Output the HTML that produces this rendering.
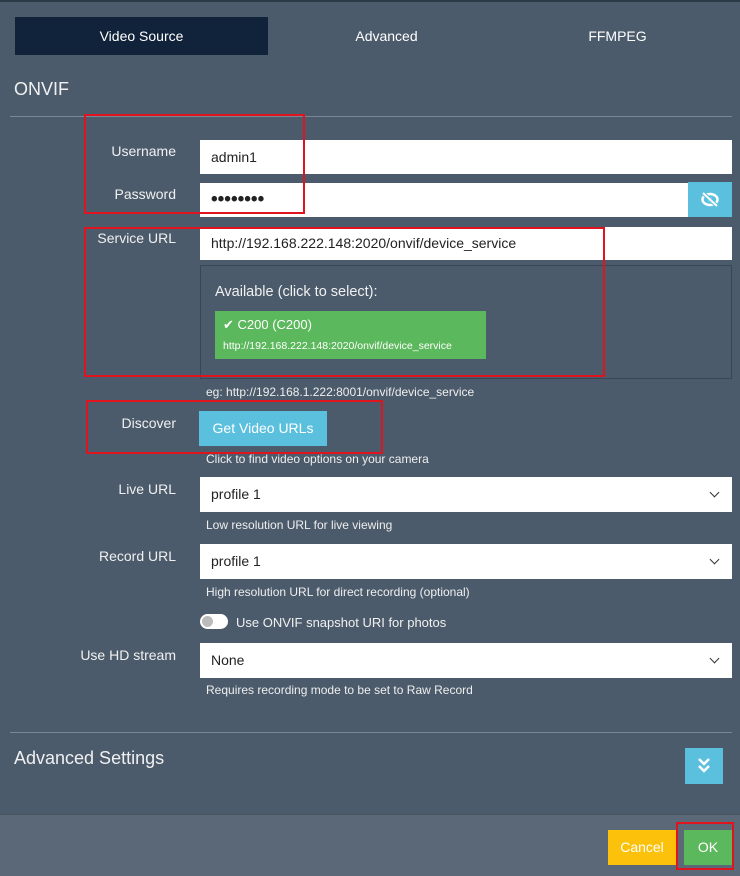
<!DOCTYPE html>
<html><head><meta charset="utf-8"><style>
*{box-sizing:border-box;margin:0;padding:0}
body{width:740px;height:876px;background:#4c5b6b;font-family:"Liberation Sans",sans-serif;color:#f0f0f0;position:relative;overflow:hidden}
.a{position:absolute}
.tab{top:17px;height:38px;width:253px;text-align:center;line-height:38px;font-size:14px;color:#fff}
.lbl{right:564px;font-size:14px;color:#f0f0f0;text-align:right}
.inp{left:200px;width:532px;height:34px;background:#fff;color:#222;font-size:14px;padding-left:11px;line-height:34px}
.help{left:206px;font-size:12px;color:#eee}
.chev{position:absolute;right:14px;top:12px;width:7px;height:7px;border-right:1.5px solid #333;border-bottom:1.5px solid #333;transform:rotate(45deg)}
.red{border:2px solid #e0141e}
.hr{left:10px;width:722px;height:1px;background:#7a8693}
</style></head><body>
<div class="a" style="left:0;top:0;width:740px;height:2px;background:#2c3a48"></div>
<div class="a tab" style="left:15px;background:#10233a">Video Source</div>
<div class="a tab" style="left:260px">Advanced</div>
<div class="a tab" style="left:491px">FFMPEG</div>
<div class="a" style="left:14px;top:79px;font-size:18px">ONVIF</div>
<div class="a hr" style="top:116px"></div>

<div class="a lbl" style="top:143px">Username</div>
<div class="a inp" style="top:140px">admin1</div>
<div class="a lbl" style="top:186px">Password</div>
<div class="a inp" style="top:183px;width:488px;font-size:19px;font-weight:bold;letter-spacing:0px">••••••••</div>
<div class="a" style="left:688px;top:182px;width:44px;height:35px;background:#5bc0de">
<svg width="44" height="35" viewBox="0 0 44 35"><ellipse cx="22" cy="17.5" rx="7.5" ry="5.5" fill="none" stroke="#fff" stroke-width="2.5"/><circle cx="22" cy="17.5" r="2.3" fill="#fff"/><line x1="15" y1="11" x2="29" y2="24" stroke="#5bc0de" stroke-width="4"/><line x1="15" y1="11" x2="29" y2="24" stroke="#fff" stroke-width="2"/></svg></div>

<div class="a lbl" style="top:230px">Service URL</div>
<div class="a inp" style="top:227px;height:33px;line-height:33px">http://192.168.222.148:2020/onvif/device_service</div>
<div class="a" style="left:200px;top:265px;width:532px;height:114px;border:1px solid #3a4654"></div>
<div class="a" style="left:215px;top:284px;font-size:14.5px">Available (click to select):</div>
<div class="a" style="left:215px;top:311px;width:271px;height:48px;background:#5cb85c;color:#fff">
<div style="position:absolute;left:8px;top:6px;font-size:13px">✔ C200 (C200)</div>
<div style="position:absolute;left:8px;top:29px;font-size:10.5px">http://192.168.222.148:2020/onvif/device_service</div></div>
<div class="a help" style="top:385px">eg: http://192.168.1.222:8001/onvif/device_service</div>

<div class="a lbl" style="top:415px">Discover</div>
<div class="a" style="left:199px;top:411px;width:128px;height:35px;background:#5bc0de;color:#fff;font-size:14px;line-height:35px;text-align:center">Get Video URLs</div>
<div class="a help" style="top:452px">Click to find video options on your camera</div>

<div class="a lbl" style="top:481px">Live URL</div>
<div class="a inp" style="top:477px;height:35px;line-height:35px">profile 1<span class="chev"></span></div>
<div class="a help" style="top:518px">Low resolution URL for live viewing</div>

<div class="a lbl" style="top:548px">Record URL</div>
<div class="a inp" style="top:544px;height:35px;line-height:35px">profile 1<span class="chev"></span></div>
<div class="a help" style="top:585px">High resolution URL for direct recording (optional)</div>

<div class="a" style="left:200px;top:614px;width:28px;height:15px;border-radius:8px;background:#fff"><div style="position:absolute;left:2px;top:2px;width:11px;height:11px;border-radius:50%;background:#bbb"></div></div>
<div class="a" style="left:236px;top:615px;font-size:13px">Use ONVIF snapshot URI for photos</div>

<div class="a lbl" style="top:647px">Use HD stream</div>
<div class="a inp" style="top:643px;height:35px;line-height:35px">None<span class="chev"></span></div>
<div class="a help" style="top:683px">Requires recording mode to be set to Raw Record</div>

<div class="a hr" style="top:732px"></div>
<div class="a" style="left:14px;top:748px;font-size:18px">Advanced Settings</div>
<div class="a" style="left:685px;top:748px;width:38px;height:36px;background:#5bc0de">
<svg width="38" height="36" viewBox="0 0 38 36"><path d="M14 11l5 5 5-5M14 18l5 5 5-5" fill="none" stroke="#fff" stroke-width="2.5"/></svg></div>

<div class="a" style="left:0;top:814px;width:740px;height:62px;background:#5a6877;border-top:1px solid #46525f"></div>
<div class="a" style="left:608px;top:830px;width:68px;height:35px;background:#fcc10b;color:#fff;font-size:14px;line-height:35px;text-align:center">Cancel</div>
<div class="a" style="left:684px;top:830px;width:48px;height:35px;background:#5cb85c;color:#fff;font-size:14px;line-height:35px;text-align:center">OK</div>

<div class="a red" style="left:84px;top:114px;width:221px;height:100px"></div>
<div class="a red" style="left:84px;top:227px;width:521px;height:150px"></div>
<div class="a red" style="left:86px;top:400px;width:297px;height:54px"></div>
<div class="a red" style="left:676px;top:822px;width:58px;height:48px"></div>
</body></html>
